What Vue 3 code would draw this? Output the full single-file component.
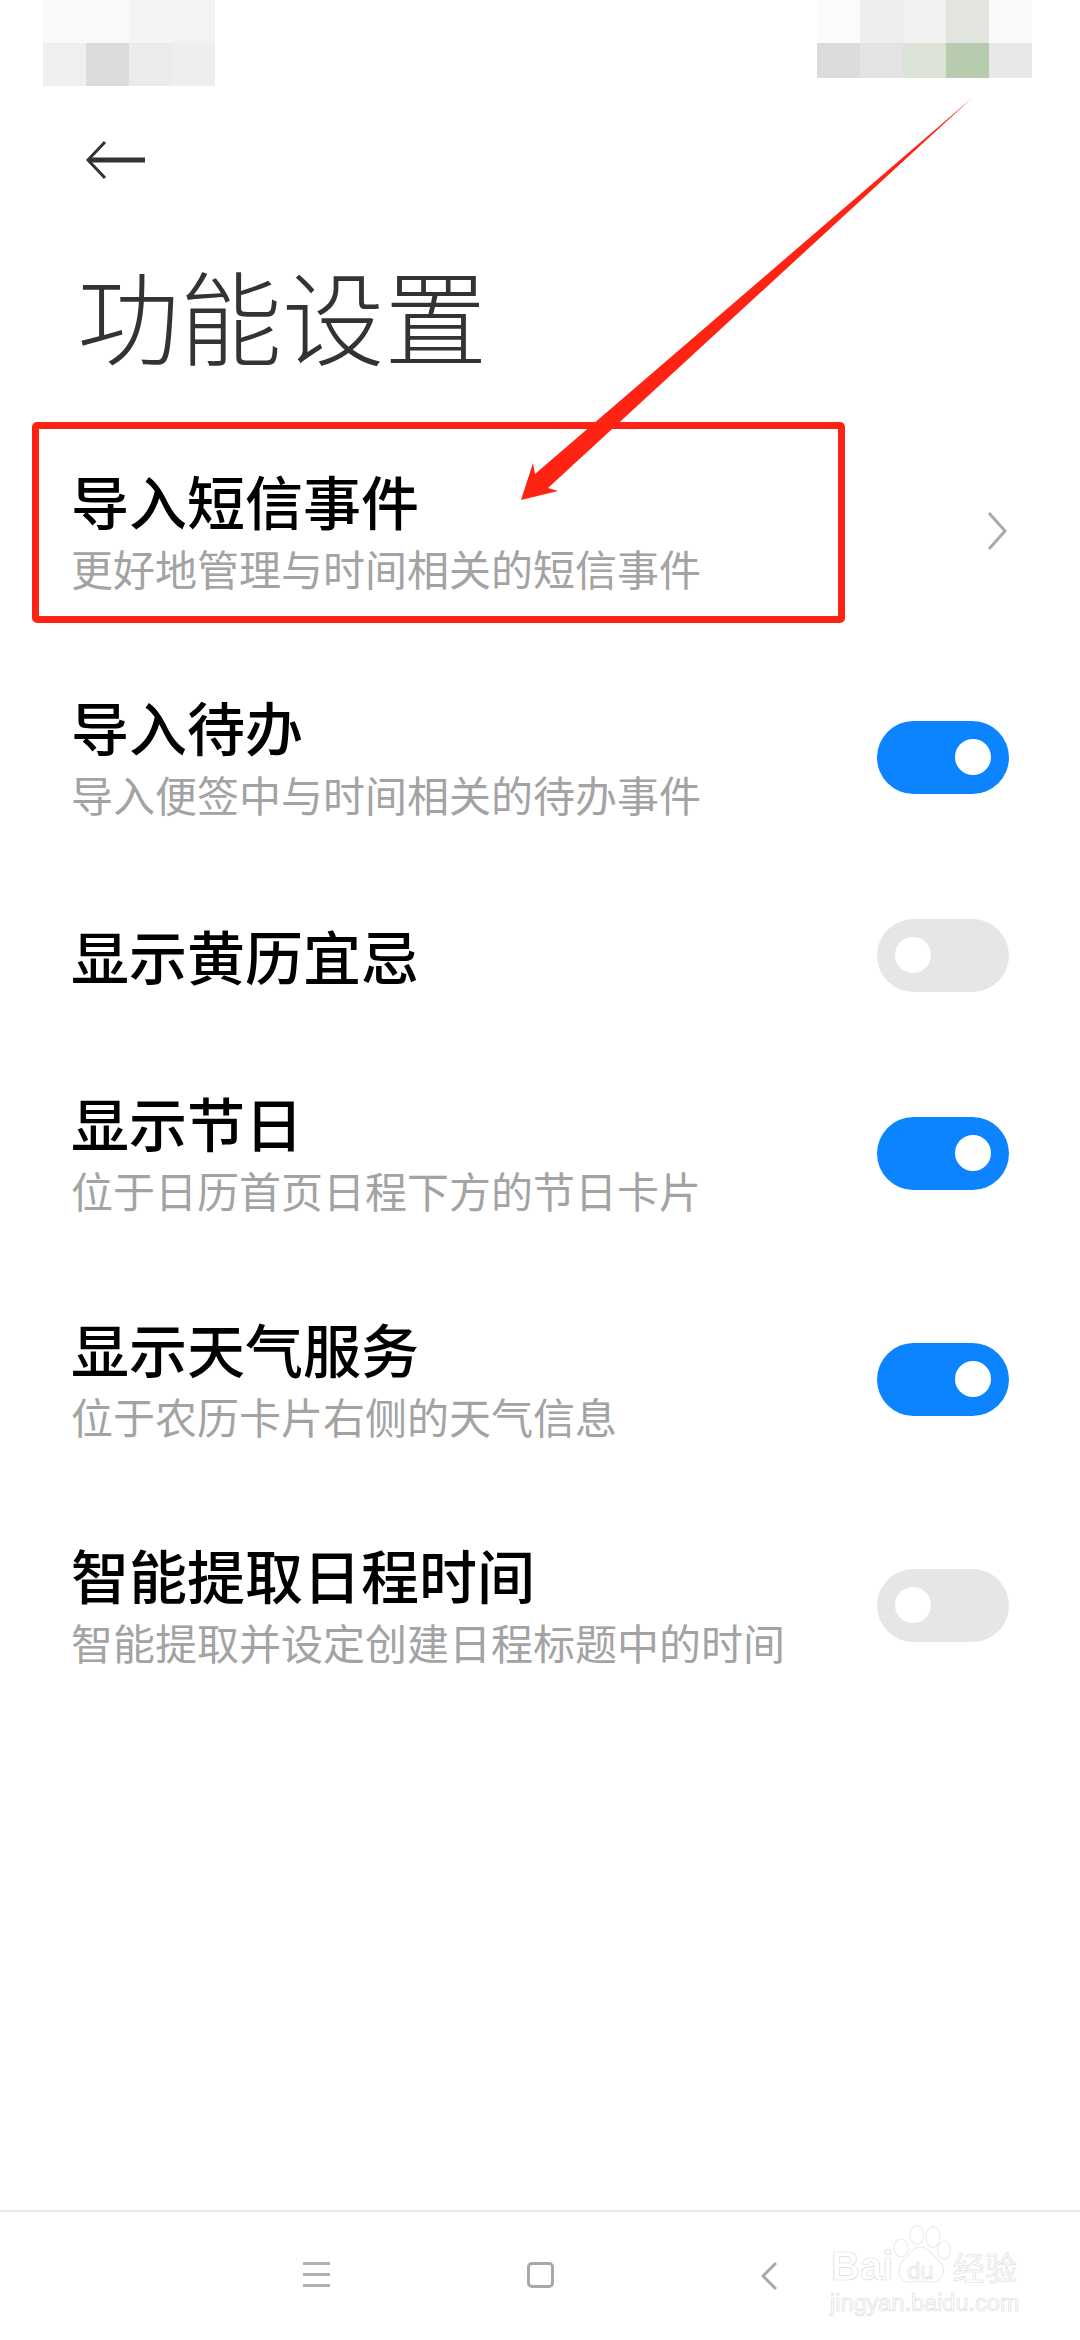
<template>
  <div class="page">
    <div class="status">
      <div class="mosaic">
        <i v-for="(c, i) in mosaicLeft" :key="i" :style="{ background: c }"></i>
      </div>
      <div class="mosaic right">
        <i v-for="(c, i) in mosaicRight" :key="i" :style="{ background: c }"></i>
      </div>
    </div>

    <div class="back">
      <svg width="60" height="40" viewBox="0 0 60 40">
        <path d="M20 2 L3 20 L20 38" fill="none" stroke="#333" stroke-width="3" />
        <path d="M4 20 H60" fill="none" stroke="#333" stroke-width="5" />
      </svg>
    </div>

    <h1 class="title">功能设置</h1>

    <div class="list">
      <div v-for="row in rows" :key="row.title" class="row" :class="{ short: !row.sub }">
        <div class="text">
          <div class="name">{{ row.title }}</div>
          <div v-if="row.sub" class="sub">{{ row.sub }}</div>
        </div>
        <svg v-if="row.arrow" class="chev" width="20" height="38" viewBox="0 0 20 38">
          <path d="M2 1 L18 19 L2 37" fill="none" stroke="#aaa" stroke-width="3" />
        </svg>
        <div v-else class="switch" :class="{ on: row.on }"><span></span></div>
      </div>
    </div>

    <div class="navbar">
      <div class="nav-menu"><b></b><b></b><b></b></div>
      <div class="nav-home"></div>
      <svg class="nav-back" width="16" height="28" viewBox="0 0 16 28">
        <path d="M15 1 L2 14 L15 27" fill="none" stroke="#a8a8a8" stroke-width="3" />
      </svg>
    </div>

    <!-- red annotation over the screenshot -->
    <div class="redbox"></div>
    <svg class="annot" width="1080" height="620" viewBox="0 0 1080 620">
      <path d="M972 98 L535 474 L533 463 L521 500 L558 491 L548 488 Z" fill="#ff2314" />
    </svg>

    <div class="watermark">
      <svg class="paw" width="60" height="62" viewBox="0 0 60 62">
        <g fill="none" stroke="#ececec" stroke-width="1.2">
          <ellipse cx="8" cy="23" rx="7" ry="9" />
          <ellipse cx="24" cy="10" rx="7" ry="9.5" />
          <ellipse cx="40" cy="12" rx="7" ry="10.5" />
          <ellipse cx="51" cy="25" rx="6.5" ry="9" />
          <path d="M27 22 C20 22 16 30 10 36 C3 44 5 58 18 57 C24 56 30 56 36 57 C50 58 55 44 46 36 C40 30 34 22 27 22 Z" />
        </g>
      </svg>
      <span class="wm-bai">Bai</span>
      <span class="wm-du">du</span>
      <span class="wm-cn">经验</span>
      <span class="wm-url">jingyan.baidu.com</span>
    </div>
  </div>
</template>

<script setup>
const mosaicLeft = ['#f9f9f9', '#f9f9f9', '#f4f4f4', '#f3f3f3', '#efefef', '#dcdcdc', '#ebebeb', '#eeeeee']
const mosaicRight = ['#fbfbfb', '#eeeeee', '#f1f1f1', '#e2e5df', '#f9f9f9', '#dcdcdc', '#e3e3e3', '#dae3d6', '#b7cbae', '#e8e8e8']

const rows = [
  { title: '导入短信事件', sub: '更好地管理与时间相关的短信事件', arrow: true },
  { title: '导入待办', sub: '导入便签中与时间相关的待办事件', on: true },
  { title: '显示黄历宜忌', on: false },
  { title: '显示节日', sub: '位于日历首页日程下方的节日卡片', on: true },
  { title: '显示天气服务', sub: '位于农历卡片右侧的天气信息', on: true },
  { title: '智能提取日程时间', sub: '智能提取并设定创建日程标题中的时间', on: false }
]
</script>

<style scoped>
.page {
  position: relative;
  width: 1080px;
  height: 2340px;
  overflow: hidden;
  background: #fff;
  display: flex;
  flex-direction: column;
  font-family: "Noto Sans CJK SC", "Noto Sans", sans-serif;
}

.status {
  height: 86px;
  padding: 0 48px 0 43px;
  display: flex;
  justify-content: space-between;
  align-items: flex-start;
}

.mosaic {
  display: grid;
  grid-template-columns: repeat(4, 43px);
  grid-template-rows: 43px 43px;
}

.mosaic.right {
  grid-template-columns: repeat(5, 43px);
  grid-template-rows: 43px 35px;
}

.back {
  height: 40px;
  margin-top: 54px;
  padding-left: 85px;
}

.back svg {
  display: block;
}

.title {
  margin: 0;
  margin-top: 59px;
  padding-left: 77px;
  height: 150px;
  font-size: 102.5px;
  line-height: 150px;
  font-weight: 300;
  color: #333;
}

.list {
  margin-top: 29px;
}

.row {
  height: 226px;
  padding: 0 71px;
  display: flex;
  align-items: center;
  justify-content: space-between;
}

.row.short {
  height: 170px;
}

.name {
  font-size: 58px;
  line-height: 70px;
  font-weight: 500;
  color: #000;
}

.sub {
  margin-top: 3px;
  font-size: 42px;
  line-height: 60px;
  color: #a3a3a3;
}

.chev {
  margin-right: 2px;
}

.switch {
  width: 132px;
  height: 73px;
  border-radius: 37px;
  background: #e6e6e6;
  display: flex;
  align-items: center;
  padding: 0 18px;
  box-sizing: border-box;
}

.switch span {
  width: 36px;
  height: 36px;
  border-radius: 50%;
  background: #fff;
}

.switch.on {
  background: #0d84ff;
  justify-content: flex-end;
}

.navbar {
  margin-top: auto;
  height: 130px;
  box-sizing: border-box;
  border-top: 2px solid #e8e8e8;
  display: flex;
  align-items: flex-start;
  padding: 50px 0 0 303px;
}

.nav-menu {
  width: 27px;
  height: 25px;
  display: flex;
  flex-direction: column;
  justify-content: space-between;
}

.nav-menu b {
  display: block;
  height: 3px;
  background: #b0b0b0;
}

.nav-home {
  margin-left: 197px;
  width: 27px;
  height: 26px;
  box-sizing: border-box;
  border: 3px solid #a8a8a8;
  border-radius: 5px;
}

.nav-back {
  margin-left: 207px;
}

.redbox {
  position: absolute;
  left: 32px;
  top: 422px;
  width: 813px;
  height: 201px;
  box-sizing: border-box;
  border: 7px solid #ff2314;
  border-radius: 5px;
}

.annot {
  position: absolute;
  left: 0;
  top: 0;
}

/* coords below are relative to 820,2215 */
.watermark {
  position: absolute;
  left: 820px;
  top: 2215px;
  width: 210px;
  height: 110px;
  font-family: "Liberation Sans", sans-serif;
  color: #fff;
  -webkit-text-stroke: 0.7px #dedede;
}

.watermark span {
  position: absolute;
  white-space: nowrap;
}

.paw {
  position: absolute;
  left: 73px;
  top: 10px;
}

.wm-bai {
  left: 11px;
  top: 34px;
  font-size: 40px;
  line-height: 34px;
  font-weight: 700;
}

.wm-du {
  left: 87px;
  top: 46px;
  font-size: 24px;
  line-height: 20px;
}

.wm-cn {
  left: 133px;
  top: 34px;
  font-size: 32px;
  line-height: 34px;
  font-family: "Noto Sans CJK SC", sans-serif;
}

.wm-url {
  left: 10px;
  top: 76px;
  font-size: 23.5px;
  line-height: 24px;
}
</style>
